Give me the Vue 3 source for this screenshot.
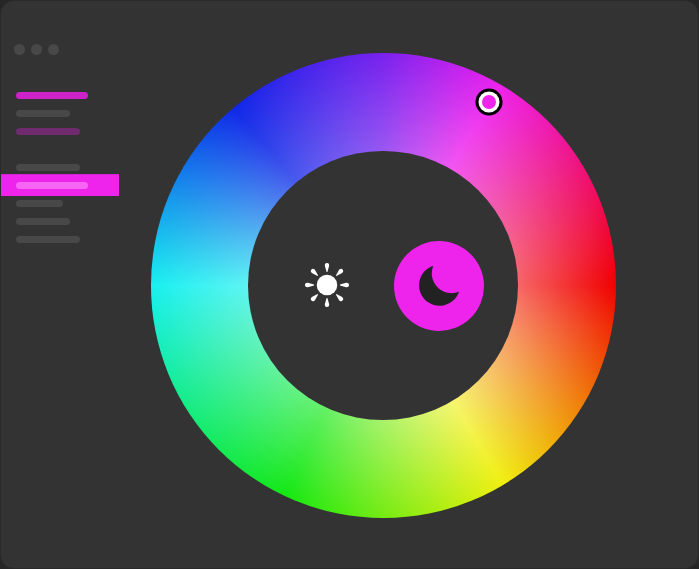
<script setup>
const groups = [
  [
    { w: 72, tone: 'hot' },
    { w: 54, tone: 'dim' },
    { w: 64, tone: 'mute' },
  ],
  [
    { w: 64, tone: 'dim' },
    { w: 72, tone: 'sel' },
    { w: 47, tone: 'dim' },
    { w: 54, tone: 'dim' },
    { w: 64, tone: 'dim' },
  ],
]
const rays = [0, 45, 90, 135, 180, 225, 270, 315]
</script>

<template>
  <div class="window">
    <aside class="side">
      <div class="dots"><i></i><i></i><i></i></div>
      <div v-for="(g, gi) in groups" :key="gi" class="group">
        <div v-for="(r, i) in g" :key="i" class="row" :class="{ selected: r.tone === 'sel' }">
          <span class="bar" :class="r.tone" :style="{ width: r.w + 'px' }"></span>
        </div>
      </div>
    </aside>
    <main class="stage">
      <div class="wheel">
        <div class="hole">
          <svg class="sun" width="46" height="46" viewBox="-23 -23 46 46">
            <circle r="10.3" fill="#fff" />
            <path
              v-for="a in rays"
              :key="a"
              :transform="`rotate(${a})`"
              d="M0 -22 C2.1 -22 2.6 -20 1.9 -18.2 L0.4 -13 L-0.4 -13 L-1.9 -18.2 C-2.6 -20 -2.1 -22 0 -22 Z"
              fill="#fff"
            />
          </svg>
          <div class="moon-btn">
            <svg width="44" height="44" viewBox="0 0 44 44">
              <path d="M16.3 1.7 A20.5 20.5 0 1 0 42 27.7 A19.8 19.8 0 0 1 16.3 1.7 Z" fill="#222" />
            </svg>
          </div>
        </div>
        <span class="knob"></span>
      </div>
    </main>
  </div>
</template>

<style>
html, body { background: #262626; }
</style>

<style scoped>
.window {
  box-sizing: border-box;
  width: 699px;
  height: 569px;
  display: flex;
  background: #333;
  border: 1px solid #2a2a2a;
  border-radius: 14px;
  overflow: hidden;
}
.side {
  width: 118px;
  flex: none;
  padding-top: 43px;
}
.dots {
  display: flex;
  gap: 6px;
  padding-left: 13px;
  margin-bottom: 31px;
}
.dots i {
  width: 11px;
  height: 11px;
  border-radius: 50%;
  background: #484848;
}
.group { margin-bottom: 18px; }
.row {
  height: 18px;
  display: flex;
  align-items: center;
  padding-left: 15px;
}
.row.selected {
  height: 22px;
  margin: -2px 0;
  background: #ee24ec;
  box-shadow: inset 0 1px 0 #d424d2;
  position: relative;
}
.bar {
  display: block;
  height: 7px;
  border-radius: 4px;
}
.hot { background: #cc22c8; }
.dim { background: #484848; }
.mute { background: #702a6e; }
.sel { background: #f765f5; }
.stage {
  flex: 1;
  padding: 52px 0 0 32px;
}
.wheel {
  position: relative;
  width: 464.5px;
  height: 464.5px;
  border-radius: 50%;
  background: conic-gradient(from 30deg, #ee22ee 0deg, #f00000 60deg, #f0f010 119deg, #14e814 175deg, #18f0f0 240deg, #1028e8 290deg, #7a22ee 330deg, #ee22ee 360deg);
  display: flex;
  align-items: center;
  justify-content: center;
}
.wheel::before {
  content: "";
  position: absolute;
  inset: 0;
  border-radius: 50%;
  background: conic-gradient(from 30deg, rgba(255,255,255,.24) 0deg, rgba(255,255,255,.4) 60deg, rgba(255,255,255,.4) 119deg, rgba(255,255,255,.35) 175deg, rgba(255,255,255,.31) 240deg, rgba(255,255,255,.24) 290deg, rgba(255,255,255,.24) 360deg);
  -webkit-mask-image: radial-gradient(circle closest-side, #000 58%, transparent 100%);
  mask-image: radial-gradient(circle closest-side, #000 58%, transparent 100%);
}
.hole {
  position: relative;
  box-sizing: border-box;
  width: 270px;
  height: 269.5px;
  border-radius: 50%;
  background: #333;
  display: flex;
  align-items: center;
  padding-left: 56px;
  gap: 44px;
}
.sun { flex: none; }
.moon-btn {
  width: 90px;
  height: 90px;
  flex: none;
  margin-top: 2px;
  border-radius: 50%;
  background: #ee24ec;
  display: flex;
  align-items: center;
  justify-content: center;
}
.knob {
  position: absolute;
  left: 331px;
  top: 42px;
  width: 14px;
  height: 14px;
  border-radius: 50%;
  background: #ee24ec;
  box-shadow: 0 0 0 3.5px #fff, 0 0 0 6.5px #000;
}
</style>
